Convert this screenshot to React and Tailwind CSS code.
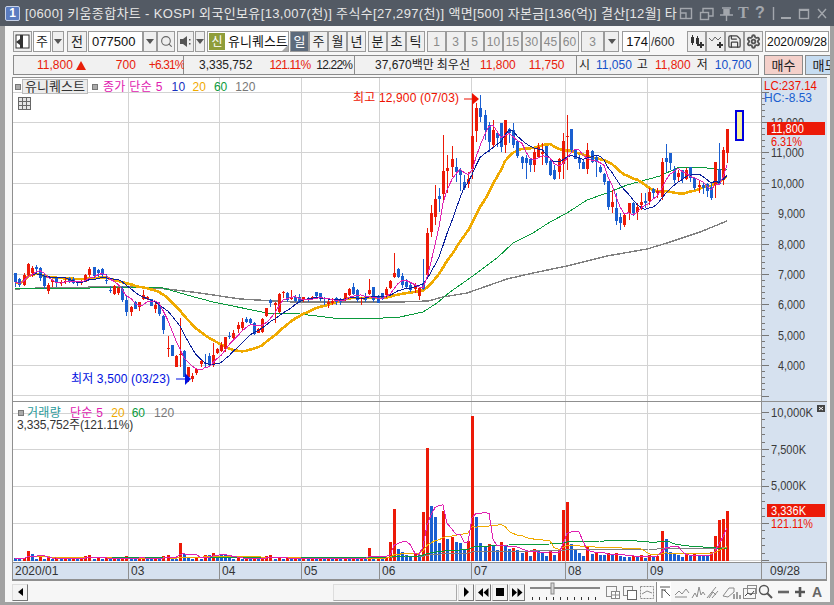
import { Save, Search, Settings } from "lucide-react";
import { twMerge } from "tailwind-merge";

// candles read off the chart: [wick top, body top, body bottom, wick bottom, up?]
// first block is in 3x crop units, y = 250 + v / 3
const c1 = [
  [68,68,96,110,0],[85,88,105,112,0],[70,75,105,108,1],[40,42,75,78,1],[48,54,70,82,1],[45,50,56,70,0],[50,54,85,92,0],[68,78,108,118,0],
  [100,106,122,132,1],[88,90,95,110,1],[82,85,98,110,0],[90,95,100,108,1],[85,92,95,102,1],[82,85,95,100,0],[82,86,98,102,0],[92,95,100,108,0],
  [90,93,97,105,1],[72,74,95,96,1],[50,58,75,82,1],[50,52,78,85,0],[58,60,68,80,0],[55,56,76,82,0],[72,90,93,102,0],[108,120,124,128,0],
  [105,108,132,134,1],[110,114,130,134,1],[108,118,150,155,0],[138,150,186,198,0],[168,170,186,198,1],[153,155,176,178,0],[155,157,172,182,1],[120,134,148,150,1],
  [138,140,146,150,1],[148,148,167,168,0],[155,166,176,188,1],[155,165,193,198,0],[195,198,240,252,0],[258,293,297,322,1],[285,285,318,318,0],[315,318,350,350,1],
  [205,312,315,350,1],[300,302,380,382,0],[350,352,382,395,1],[368,378,388,395,1],[355,358,370,375,1],[330,333,342,352,1],[312,338,342,350,0],[310,318,342,350,0],
  [280,315,345,352,1],[295,297,310,312,1],[275,285,302,306,1],[260,262,298,306,1],[245,258,262,268,0],[240,248,265,268,1],[215,226,238,248,1],[205,215,235,240,1],
  [202,208,215,220,0],[205,208,218,222,0],[215,218,252,254,0],[235,238,250,250,1],[205,208,245,250,1],[175,175,198,200,1],[148,150,160,170,0],[155,160,165,218,1],
  [128,132,185,188,1],[122,125,128,145,1],[125,128,150,155,0],[120,142,146,150,1],[135,140,152,155,0],[132,140,156,158,0],[140,142,150,156,1],[142,145,148,155,0],
  [138,140,148,150,1],[125,127,138,140,0],[128,130,148,152,0],[142,145,148,165,0],[150,155,162,175,1],[145,152,160,165,1],[142,145,155,165,0],[145,148,156,165,0],
  [128,130,148,152,1],[115,118,135,138,1],[98,112,132,135,0],[118,120,150,155,0],[140,143,148,165,1],[130,143,150,155,0],[88,120,132,135,1],[110,112,150,155,0],
  [135,138,158,158,0],[128,130,148,150,0],[112,116,136,145,1],[90,92,114,118,1],[10,68,80,85,1],[55,56,80,85,0],
];
// second block, y = 90 + v / 3
const c2 = [
  [550,558,585,595,0],[568,575,590,595,0],[580,585,600,605,0],[580,585,597,610,1],[590,595,618,630,1],[508,578,598,600,0],[415,430,555,560,1],[345,370,425,440,1],
  [285,328,380,405,1],[293,318,326,365,0],[135,243,312,340,1],[195,234,243,310,1],[168,208,230,260,1],[205,230,245,275,0],[235,240,255,302,0],[255,277,295,300,0],
  [245,268,282,295,1],[30,138,238,268,1],[40,55,122,155,1],[15,55,80,95,0],[60,75,120,150,0],[95,105,155,185,0],[90,120,165,175,1],[125,128,145,170,0],
  [100,100,172,185,0],[90,90,165,190,1],[115,118,128,160,0],[100,120,165,175,0],[152,152,198,205,0],[198,200,218,238,0],[195,205,218,268,0],[205,206,225,245,0],
  [175,187,225,245,1],[160,172,200,205,1],[160,187,192,225,1],[168,168,220,225,0],[210,212,255,258,0],[225,240,268,270,0],[205,208,245,268,1],[130,153,222,268,1],
  [75,138,142,240,1],[117,117,180,185,0],[180,180,208,208,0],[195,203,218,238,0],[210,216,236,238,0],[160,180,238,252,1],[180,182,215,220,0],[195,200,215,260,0],
  [225,232,245,250,0],[250,252,275,285,0],[272,274,350,360,0],[300,336,350,370,1],[310,354,392,405,0],[370,382,400,420,0],[370,374,405,412,1],[340,340,370,390,1],
  [335,338,370,378,0],[340,350,366,390,1],[310,336,345,360,1],[310,333,338,355,0],[293,306,332,345,1],[295,298,308,325,0],[295,303,310,325,1],[205,216,322,330,1],
  [163,205,216,245,0],[190,190,220,240,0],[228,238,270,278,0],[240,248,260,275,1],[240,240,268,278,0],[235,240,268,270,1],[230,232,265,275,0],[265,265,293,300,0],
  [270,285,290,310,1],[280,285,295,312,0],[280,282,303,320,0],[280,292,325,330,0],[215,217,285,325,1],[160,237,282,285,0],[172,180,270,285,1],[118,118,188,218,1],
];
const toY = (base) => (c) => [base + c[0] / 3, base + c[1] / 3, base + c[2] / 3, base + c[3] / 3, c[4]];
const candles = [...c1.map(toY(250)), ...c2.map(toY(90))];
const xAt = (i) => Math.round(15.3 + 4.116 * i);

const sma = (vals, n) =>
  vals.map((_, i) => {
    const part = vals.slice(Math.max(0, i - n + 1), i + 1);
    return part.reduce((a, b) => a + b, 0) / part.length;
  });
const pts = (vals, from = 0) => vals.map((v, i) => `${xAt(i)},${v.toFixed(1)}`).slice(from).join(" ");

const closes = candles.map((c) => (c[4] ? c[1] : c[2]));

// long averages traced by hand, they start before the visible window
const ma60 = "15,288 90,288 100,287 130,287 163,288 187,295 213,302 267,313 300,314 333,318 367,319 400,317 423,312 437,303 450,292 470,278 497,258 513,243 533,233 550,222 567,213 587,200 607,193 627,185 660,176 677,168 697,167 727,170";
const ma120 = "15,289 40,288 100,287 140,287 167,289 200,293 240,299 293,302 333,302 400,302 428,301 443,297 467,293 507,279 533,273 567,266 607,256 647,249 667,243 700,232 727,221";

const grid = [122, 152, 183, 213, 244, 274, 304, 335, 365, 395];
const vlines = [128, 219, 301, 379, 471, 565, 647];

const volTops = { 3:468,4:477,6:483,17:484,18:480,27:483,31:487,36:484,37:480,40:444,41:477,46:480,47:480,48:474,49:480,50:480,51:480,61:484,62:480,86:459,91:441,92:342,93:462,94:470,95:480,96:485,97:478,98:480,
  99:352,100:158,101:333,102:366,103:443,104:348,105:432,106:425,107:441,108:445,109:462,110:438,111:62,112:366,113:444,114:455,115:447,116:450,117:465,118:441,119:452,120:462,121:458,122:465,123:473,124:470,125:483,126:462,127:466,128:473,129:483,130:468,131:480,132:462,133:345,134:321,135:448,136:463,137:474,138:483,139:453,140:477,141:473,142:480,143:480,144:475,145:478,146:475,147:483,148:485,149:487,150:483,151:485,152:480,153:488,154:480,155:485,156:484,157:408,158:432,159:471,160:476,161:480,162:485,163:480,164:482,165:478,166:482,167:482,168:484,169:472,170:423,171:375,172:372,173:348 };
const volH = candles.map((_, i) => (497 - (volTops[i] ?? (i % 2 ? 491 : 490))) / 3);
const volBase = 560.7;

function MainPlot() {
  return (
    <svg width="748" height="323" viewBox="13 78 748 323" className="block">
      <g shapeRendering="crispEdges" stroke="#d3d3d3">
        <line x1="13" x2="761" y1="92.5" y2="92.5" />
        {grid.map((y) => <line key={y} x1="13" x2="761" y1={y + 0.5} y2={y + 0.5} />)}
        {vlines.map((x) => <line key={x} x1={x + 0.5} x2={x + 0.5} y1="78" y2="401" />)}
      </g>
      <g shapeRendering="crispEdges" fill="none">
        <polyline points={ma120} stroke="#808080" strokeWidth="1.4" />
        <polyline points={ma60} stroke="#0a9a3c" />
        <polyline points={pts(sma(closes, 20))} stroke="#f0aa00" strokeWidth="2.6" />
        {candles.map((c, i) => {
          const col = c[4] ? "#ec1a08" : "#1a5fd0";
          const x = xAt(i);
          return (
            <g key={i}>
              <rect x={x} y={c[0]} width="1" height={c[3] - c[0]} fill={col} />
              <rect x={x - 1} y={c[1]} width="3" height={Math.max(1, c[2] - c[1])} fill={col} />
            </g>
          );
        })}
        <polyline points={pts(sma(closes, 10))} stroke="#0a1f9a" />
        <polyline points={pts(sma(closes, 5))} stroke="#e020b0" />
      </g>
      <rect x="736" y="111" width="7" height="29" fill="#f8f2a0" stroke="#0000e0" strokeWidth="2" shapeRendering="crispEdges" />
      <text x="353" y="102" fontSize="12" fill="#ee1100" textLength="106">최고 12,900 (07/03)</text>
      <path d="M464 99H472" stroke="#ee1100" />
      <path d="M472 93L479 99L472 105Z" fill="#ee1100" />
      <text x="71" y="383" fontSize="12" fill="#0010e0" textLength="99">최저 3,500 (03/23)</text>
      <path d="M176 379H185" stroke="#0010e0" />
      <path d="M185 373L191 379L185 385Z" fill="#0010e0" />
    </svg>
  );
}

function VolPlot() {
  const lines = [[120, "#808080"], [60, "#0a9a3c"], [20, "#f0aa00"], [5, "#e020b0"]];
  return (
    <svg width="748" height="160" viewBox="13 402 748 160" className="block">
      <g shapeRendering="crispEdges" stroke="#d3d3d3">
        {[413, 449, 486, 523, 560].map((y) => <line key={y} x1="13" x2="761" y1={y + 0.5} y2={y + 0.5} />)}
        {vlines.map((x) => <line key={x} x1={x + 0.5} x2={x + 0.5} y1="402" y2="562" />)}
      </g>
      <g shapeRendering="crispEdges">
        {volH.map((h, i) => (
          <rect key={i} x={xAt(i) - 1} y={volBase - h} width="3" height={h} fill={i > 0 && h > volH[i - 1] ? "#ec1a08" : "#1a5fd0"} />
        ))}
        {lines.map(([n, col]) => (
          <polyline key={n} points={pts(sma(volH, n).map((v) => volBase - v))} fill="none" stroke={col} />
        ))}
      </g>
    </svg>
  );
}

function PriceAxis() {
  const ticks = [];
  for (let i = 0; i <= 50; i++) ticks.push(i);
  return (
    <svg width="65" height="323" viewBox="761 78 65 323" className="block">
      <g shapeRendering="crispEdges" stroke="#777">
        {ticks.map((i) => {
          const y = Math.round(395.5 - i * 6.08);
          return <line key={i} x1="761" x2={i % 5 === 0 ? 768 : 764} y1={y + 0.5} y2={y + 0.5} />;
        })}
      </g>
      <text x="763" y="90" fontSize="13" fill="#ee1100" textLength="53" lengthAdjust="spacingAndGlyphs">LC:237.14</text>
      <text x="763" y="102" fontSize="13" fill="#1a5fd0" textLength="48" lengthAdjust="spacingAndGlyphs">HC:-8.53</text>
      <g fontSize="13" fill="#3a3a3a">
        {[["12,000", 122], ["11,000", 152], ["10,000", 183], ["9,000", 213], ["8,000", 244], ["7,000", 274], ["6,000", 304], ["5,000", 335], ["4,000", 365]].map(([t, y]) => (
          <text key={t} x={t.length > 5 ? 770 : 777} y={y + 5} textLength={t.length > 5 ? 33 : 27} lengthAdjust="spacingAndGlyphs">{t}</text>
        ))}
      </g>
      <rect x="766" y="122" width="58" height="13" fill="#ec1a08" />
      <text x="770" y="133" fontSize="13" fill="#fff" textLength="33" lengthAdjust="spacingAndGlyphs">11,800</text>
      <text x="770" y="146" fontSize="13" fill="#ee1100" textLength="31" lengthAdjust="spacingAndGlyphs">6.31%</text>
    </svg>
  );
}

function VolAxis() {
  const ticks = [];
  for (let i = 0; i <= 20; i++) ticks.push(i);
  return (
    <svg width="65" height="160" viewBox="761 402 65 160" className="block">
      <g shapeRendering="crispEdges" stroke="#777">
        {ticks.map((i) => {
          const y = Math.round(560 - i * 7.4);
          return <line key={i} x1="761" x2={i % 5 === 0 ? 768 : 764} y1={y + 0.5} y2={y + 0.5} />;
        })}
      </g>
      <g fontSize="13" fill="#3a3a3a">
        <text x="770" y="417" textLength="42" lengthAdjust="spacingAndGlyphs">10,000K</text>
        <text x="770" y="454" textLength="35" lengthAdjust="spacingAndGlyphs">7,500K</text>
        <text x="770" y="490" textLength="35" lengthAdjust="spacingAndGlyphs">5,000K</text>
      </g>
      <rect x="766" y="504" width="58" height="13" fill="#ec1a08" />
      <text x="770" y="515" fontSize="13" fill="#fff" textLength="35" lengthAdjust="spacingAndGlyphs">3,336K</text>
      <text x="770" y="528" fontSize="13" fill="#ee1100" textLength="42" lengthAdjust="spacingAndGlyphs">121.11%</text>
      <rect x="816" y="405" width="8" height="7" fill="#444" />
      <path d="M818 407L822 410M822 407L818 410" stroke="#fff" />
    </svg>
  );
}

// plain raised toolbar cell
function Cell({ className = "", children }) {
  return (
    <div className={twMerge("h-[21px] flex items-center justify-center border border-[#9b9b9b] bg-[#efefef] text-[13px] leading-none text-[#222] shrink-0", className)}>
      {children}
    </div>
  );
}

const Tri = () => <div className="w-0 h-0 border-l-[4px] border-r-[4px] border-t-[5px] border-l-transparent border-r-transparent border-t-[#555]" />;

const Dot = () => <div className="w-[6px] h-[6px] bg-[#aaa] border border-[#777] shrink-0" />;

function Toolbar() {
  return (
    <div className="flex items-center h-[21px] ml-[8px]">
      <Cell className="w-[19px]">
        <svg width="15" height="15" viewBox="0 0 15 15"><rect x="1" y="1" width="13" height="13" fill="#fff" stroke="#333" /><rect x="5" y="1" width="3" height="13" fill="#333" /><path d="M1 8L5 5V11Z" fill="#333" /></svg>
      </Cell>
      <Cell className="w-[18px] ml-[1px] bg-white">주</Cell>
      <Cell className="w-[12px] ml-[1px]"><Tri /></Cell>
      <Cell className="w-[20px] ml-[3px]">전</Cell>
      <Cell className="w-[55px] ml-[1px] bg-white justify-start pl-[3px] text-[#111]">077500</Cell>
      <Cell className="w-[14px]"><Tri /></Cell>
      <Cell className="w-[18px]"><Search size={13} strokeWidth={2} color="#666" /></Cell>
      <Cell className="w-[17px] ml-[2px]">
        <svg width="13" height="13" viewBox="0 0 13 13"><path d="M1 4H4L8 1V12L4 9H1Z" fill="#555" /><rect x="10" y="4" width="1.5" height="1.5" fill="#555" /><rect x="10" y="8" width="1.5" height="1.5" fill="#555" /></svg>
      </Cell>
      <Cell className="w-[10px] ml-[1px]"><Tri /></Cell>
      <Cell className="w-[82px] ml-[2px] bg-white justify-start relative">
        <div className="w-[16px] h-[17px] ml-[1px] bg-[#8f9d3a] text-white text-[12px] flex items-center justify-center">신</div>
        <span className="ml-[3px] text-[#111]">유니퀘스트</span>
        <div className="absolute right-0 bottom-0 w-0 h-0 border-l-[6px] border-b-[6px] border-l-transparent border-b-[#aaa]" />
      </Cell>
      <Cell className="w-[19px] ml-[1px] bg-[#5d6b7c] text-white">일</Cell>
      <Cell className="w-[19px]">주</Cell>
      <Cell className="w-[19px]">월</Cell>
      <Cell className="w-[19px]">년</Cell>
      <Cell className="w-[19px] ml-[2px]">분</Cell>
      <Cell className="w-[19px]">초</Cell>
      <Cell className="w-[19px]">틱</Cell>
      {["1", "3", "5", "10", "15", "30", "45", "60"].map((t, i) => (
        <Cell key={t} className={`w-[19px] text-[12px] text-[#8a8a8a] ${i === 0 ? "ml-[2px]" : ""}`}>{t}</Cell>
      ))}
      <Cell className="w-[23px] ml-[2px] text-[12px] text-[#8a8a8a]">3</Cell>
      <Cell className="w-[15px]"><Tri /></Cell>
      <Cell className="w-[28px] ml-[3px] bg-white justify-end pr-[1px] text-[#111]">174</Cell>
      <span className="w-[37px] text-[12px] text-[#333] pl-[1px] shrink-0">/600</span>
      <Cell className="w-[19px]">
        <svg width="16" height="15" viewBox="0 0 16 15"><path d="M3.5 1V11M8.5 2V12" stroke="#333" /><rect x="2" y="3" width="3" height="6" fill="#333" /><rect x="7" y="4" width="3" height="6" fill="#333" /><path d="M12 8V14M9 11H15" stroke="#333" strokeWidth="2" /></svg>
      </Cell>
      <Cell className="w-[19px]">
        <svg width="16" height="15" viewBox="0 0 16 15"><path d="M1 4L4 7L7 3L10 6L13 3" fill="none" stroke="#666" /><path d="M12 8V14M9 11H15" stroke="#333" strokeWidth="2" /></svg>
      </Cell>
      <Cell className="w-[19px]"><Save size={15} color="#444" /></Cell>
      <Cell className="w-[19px]"><Settings size={15} color="#555" strokeWidth={3} /></Cell>
      <Cell className="w-[64px] ml-[2px] bg-white text-[#111] text-[12px]">2020/09/28</Cell>
    </div>
  );
}

const red = "text-[#e8200a]";
const blue = "text-[#1450c8]";

function InfoRow() {
  return (
    <div className="flex items-center mt-[3px] ml-[8px] h-[20px] text-[12px] leading-none text-[#222] whitespace-nowrap">
      <div className="w-[171px] h-full flex items-center border border-[#8b8b8b] bg-[#f1f1f1] shrink-0">
        <span className={`ml-[23px] ${red}`}>11,800</span>
        <div className="ml-[3px] w-0 h-0 border-l-[5px] border-r-[5px] border-b-[9px] border-l-transparent border-r-transparent border-b-[#e8200a]" />
        <span className={`ml-[30px] ${red}`}>700</span>
        <span className={`ml-[13px] tracking-[-0.9px] ${red}`}>+6.31%</span>
      </div>
      <div className="w-[171px] h-full flex items-center border-y border-r border-[#8b8b8b] bg-[#f1f1f1] shrink-0">
        <span className="ml-[15px]">3,335,752</span>
        <span className={`ml-[17px] tracking-[-0.8px] ${red}`}>121.11%</span>
        <span className="ml-[6px] tracking-[-0.8px]">12.22%</span>
      </div>
      <div className="w-[222px] h-full flex items-center border-y border-r border-[#8b8b8b] bg-[#f1f1f1] shrink-0">
        <span className="ml-[20px]">37,670백만</span>
        <span className="ml-[3px]">최우선</span>
        <span className={`ml-[10px] ${red}`}>11,800</span>
        <span className={`ml-[13px] ${red}`}>11,750</span>
      </div>
      <div className="w-[182px] h-full flex items-center border-y border-r border-[#8b8b8b] bg-[#f1f1f1] shrink-0">
        <span className="ml-[2px]">시</span>
        <span className={`ml-[6px] ${blue}`}>11,050</span>
        <span className="ml-[5px]">고</span>
        <span className={`ml-[7px] ${red}`}>11,800</span>
        <span className="ml-[6px]">저</span>
        <span className={`ml-[7px] ${blue}`}>10,700</span>
      </div>
      <div className="w-[39px] h-full ml-[5px] flex items-center justify-center border border-[#8b8b8b] bg-[#f4d0ca] text-[13px] shrink-0">매수</div>
      <div className="w-[39px] h-full ml-[2px] flex items-center justify-center border border-[#8b8b8b] bg-[#c6dcf1] text-[13px] shrink-0">매도</div>
    </div>
  );
}

function TimeAxis() {
  const cols = [
    ["w-[115px]", "2020/01"], ["w-[91px]", "03"], ["w-[82px]", "04"], ["w-[78px]", "05"],
    ["w-[92px]", "06"], ["w-[94px]", "07"], ["w-[82px]", "08"], ["w-[114px]", "09"],
  ];
  return (
    <div className="flex h-[18px] bg-[#d6e1ef] border-y border-[#8f8f8f] text-[12px] leading-none text-[#333]">
      {cols.map(([w, t], i) => (
        <div key={t} className={`${w} flex items-center pl-[2px] shrink-0 ${i > 0 ? "border-l border-[#8f8f8f]" : ""}`}>{t}</div>
      ))}
      <div className="flex-1 flex items-center pl-[8px] border-l border-[#8f8f8f]">09/28</div>
    </div>
  );
}

const PlayBtn = ({ children }) => (
  <div className="w-[16px] h-[17px] ml-[1px] flex items-center justify-center bg-[#f4f4f4] border border-[#777] border-t-[#ddd] border-l-[#ddd] shrink-0">{children}</div>
);

function BottomBar() {
  return (
    <div className="flex items-center h-[20px] mt-[1px]">
      <div className="w-[16px] h-[17px] flex items-center justify-center bg-[#f4f4f4] border border-[#777] border-t-[#ddd] border-l-[#ddd] shrink-0">
        <div className="w-0 h-0 border-y-[4px] border-r-[5px] border-y-transparent border-r-black" />
      </div>
      <div className="w-[305px] h-[17px] bg-[#f6f6f6] shrink-0" />
      <div className="w-[124px] h-[17px] bg-[#f4f4f4] border border-[#aaa] border-t-[#ddd] border-l-[#ddd] shrink-0" />
      <PlayBtn><div className="w-0 h-0 border-y-[5px] border-l-[5px] border-y-transparent border-l-black" /></PlayBtn>
      <PlayBtn><svg width="11" height="9" viewBox="0 0 11 9"><path d="M5 0V9L0 4.5ZM10.5 0V9L5.5 4.5Z" fill="#000" /></svg></PlayBtn>
      <PlayBtn><div className="w-[8px] h-[8px] bg-black" /></PlayBtn>
      <PlayBtn><svg width="11" height="9" viewBox="0 0 11 9"><path d="M0 0V9L5 4.5ZM5.5 0V9L10.5 4.5Z" fill="#000" /></svg></PlayBtn>
      <svg width="72" height="20" viewBox="0 0 72 20" className="ml-[5px] shrink-0">
        <rect x="0" y="5" width="70" height="2" fill="#888" />
        <rect x="21" y="1" width="3" height="11" fill="#d8d8d8" stroke="#888" />
        {[2, 9, 16, 23, 30, 37, 44, 51, 58, 65].map((x) => <rect key={x} x={x} y="15" width="1" height="3" fill="#333" />)}
      </svg>
      <svg width="218" height="20" viewBox="608 0 218 20" className="ml-[4px] shrink-0" fill="none" stroke="#8a8a8a">
        <rect x="608.5" y="4.5" width="10" height="10" /><rect x="613.5" y="9.5" width="8" height="7" fill="#fff" /><path d="M617.5 9.5V16.5M613.5 13H621.5" />
        <rect x="625.5" y="4.5" width="9" height="9" /><rect x="629.5" y="8.5" width="9" height="9" fill="#fff" stroke="#666" />
        <rect x="642.5" y="4.5" width="13" height="12" strokeDasharray="2 1" /><path d="M644 12L649 9L654 11" />
        <rect x="658" y="0" width="15" height="20" fill="#fff" stroke="none" /><path d="M658.5 0V20" />
        <path d="M662 5H672M664 7V16M666 8L672 14M664 8H668" stroke="#555" />
        <path d="M677 15H689M677 13L681 9L684 12L688 7L691 11" />
        <path d="M694 16L697 11L699 15L701 5L703 13L705 10L707 13" />
        <path d="M709 16L718 5M711 16L715 10L718 13M714 16L720 9" />
        <path d="M725 14L731 6H736L736 10L730 15Z" /><path d="M736 12V17M739 10V17M742 13V17" stroke="#444" />
        <rect x="745.5" y="6.5" width="12" height="10" /><rect x="749.5" y="3.5" width="9" height="8" /><path d="M747 14L750 11L753 13L756 9" stroke="#444" />
        <circle cx="766" cy="8" r="4.5" stroke="#555" strokeWidth="1.4" /><path d="M769 11L774 16" stroke="#555" strokeWidth="2" />
        <path d="M780 10H791" stroke="#666" strokeWidth="2.6" />
        <path d="M797 10H807M802 5V15" stroke="#555" strokeWidth="2.6" />
      </svg>
      <span className="text-[14px] font-bold text-[#666] leading-none -ml-[12px]">A</span>
    </div>
  );
}

export default function App() {
  return (
    <div className="w-[834px] h-[605px] overflow-hidden flex flex-col font-['Liberation_Sans','Noto_Sans_CJK_KR',sans-serif]">
      {/* title bar */}
      <div className="h-[26px] bg-[#535a64] flex items-center text-[13px] leading-none text-[#e6e6e6] shrink-0 relative">
        <div className="ml-[5px] w-[15px] h-[15px] rounded-[2px] bg-[#5a7cc0] border border-[#c7d2e8] text-white font-bold text-[12px] flex items-center justify-center shrink-0">1</div>
        <span className="ml-[5px] whitespace-pre tracking-[0.35px]">[0600] 키움종합차트 - KOSPI 외국인보유[13,007(천)] 주식수[27,297(천)] 액면[500] 자본금[136(억)] 결산[12월] 타</span>
        <div className="absolute right-0 top-0 h-[26px] w-[156px] bg-[#535a64]">
          <svg width="156" height="26" viewBox="678 0 156 26" fill="none" stroke="#a3a7ad" strokeWidth="1.4">
            <rect x="680.5" y="8.5" width="11" height="10" /><path d="M680 13H686V18" />
            <rect x="700.5" y="12.5" width="8" height="7" /><path d="M703 12V8.5H713V16H709" />
            <path d="M722 8H731M724 9L724 14H729L729 9M720 15H733M726.5 15V21" fill="#a3a7ad" />
            <path d="M773.5 7V20" />
            <path d="M781 18H791" strokeWidth="2" />
            <rect x="799.5" y="9.5" width="9" height="9" /><path d="M799 10H809" strokeWidth="2" />
            <path d="M818 9L826 18M826 9L818 18" />
          </svg>
          <span className="absolute left-[60px] top-[5px] font-['Liberation_Serif',serif] font-bold text-[16px] text-[#a3a7ad]">T</span>
          <span className="absolute left-[77px] top-[5px] font-bold text-[16px] text-[#a3a7ad]">?</span>
        </div>
      </div>

      <div className="flex-1 min-h-0 flex flex-col border-l-[5px] border-r-[4px] border-b-[3px] border-[#a2a2a2] bg-[#f7f7f7] pt-[5px] overflow-hidden">
        <Toolbar />
        <InfoRow />

        <div className="relative w-[815px] ml-[7px] mt-[2px] border border-[#8f8f8f] bg-white text-[12px] leading-none">
          <div className="flex border-b border-[#8f8f8f]">
            <div className="relative border-r border-[#8f8f8f]">
              <MainPlot />
              {/* legend over the plot */}
              <div className="absolute left-[2px] top-[1px] flex items-center h-[15px]">
                <Dot />
                <div className="ml-[1px] w-[66px] h-[15px] flex items-center justify-center bg-[#ececec] border border-[#bbb] text-[#333] text-[13px]">유니퀘스트</div>
                <div className="ml-[4px]"><Dot /></div>
                <span className="ml-[5px] tracking-[0.3px] text-[#e020b0]">종가 단순 5</span>
                <span className="ml-[9px] tracking-[0.3px] text-[#1530c0]">10</span>
                <span className="ml-[7px] text-[#f0aa00]">20</span>
                <span className="ml-[8px] text-[#0a9a3c]">60</span>
                <span className="ml-[8px] text-[#777]">120</span>
              </div>
              <div className="absolute left-[5px] top-[19px] w-[13px] h-[13px] grid grid-cols-3 gap-px p-px bg-[#666]">
                {[...Array(9)].map((_, i) => <div key={i} className="bg-[#e4e4e4]" />)}
              </div>
            </div>
            <div className="bg-[#d6e1ef] flex-1"><PriceAxis /></div>
          </div>
          <div className="flex">
            <div className="relative border-r border-[#8f8f8f]">
              <VolPlot />
              <div className="absolute left-[5px] top-[4px] flex items-center h-[13px]">
                <Dot />
                <span className="ml-[3px] tracking-[0.3px] text-[#2a9a9a]">거래량</span>
                <span className="ml-[9px] tracking-[0.3px] text-[#e020b0]">단순 5</span>
                <span className="ml-[8px] text-[#f0aa00]">20</span>
                <span className="ml-[7px] text-[#0a9a3c]">60</span>
                <span className="ml-[9px] text-[#777]">120</span>
              </div>
              <div className="absolute left-[4px] top-[17px] tracking-[-0.15px] text-[#333]">3,335,752주(121.11%)</div>
            </div>
            <div className="bg-[#d6e1ef] flex-1"><VolAxis /></div>
          </div>
          <TimeAxis />
        </div>

        <div className="ml-[7px]"><BottomBar /></div>
      </div>
    </div>
  );
}
